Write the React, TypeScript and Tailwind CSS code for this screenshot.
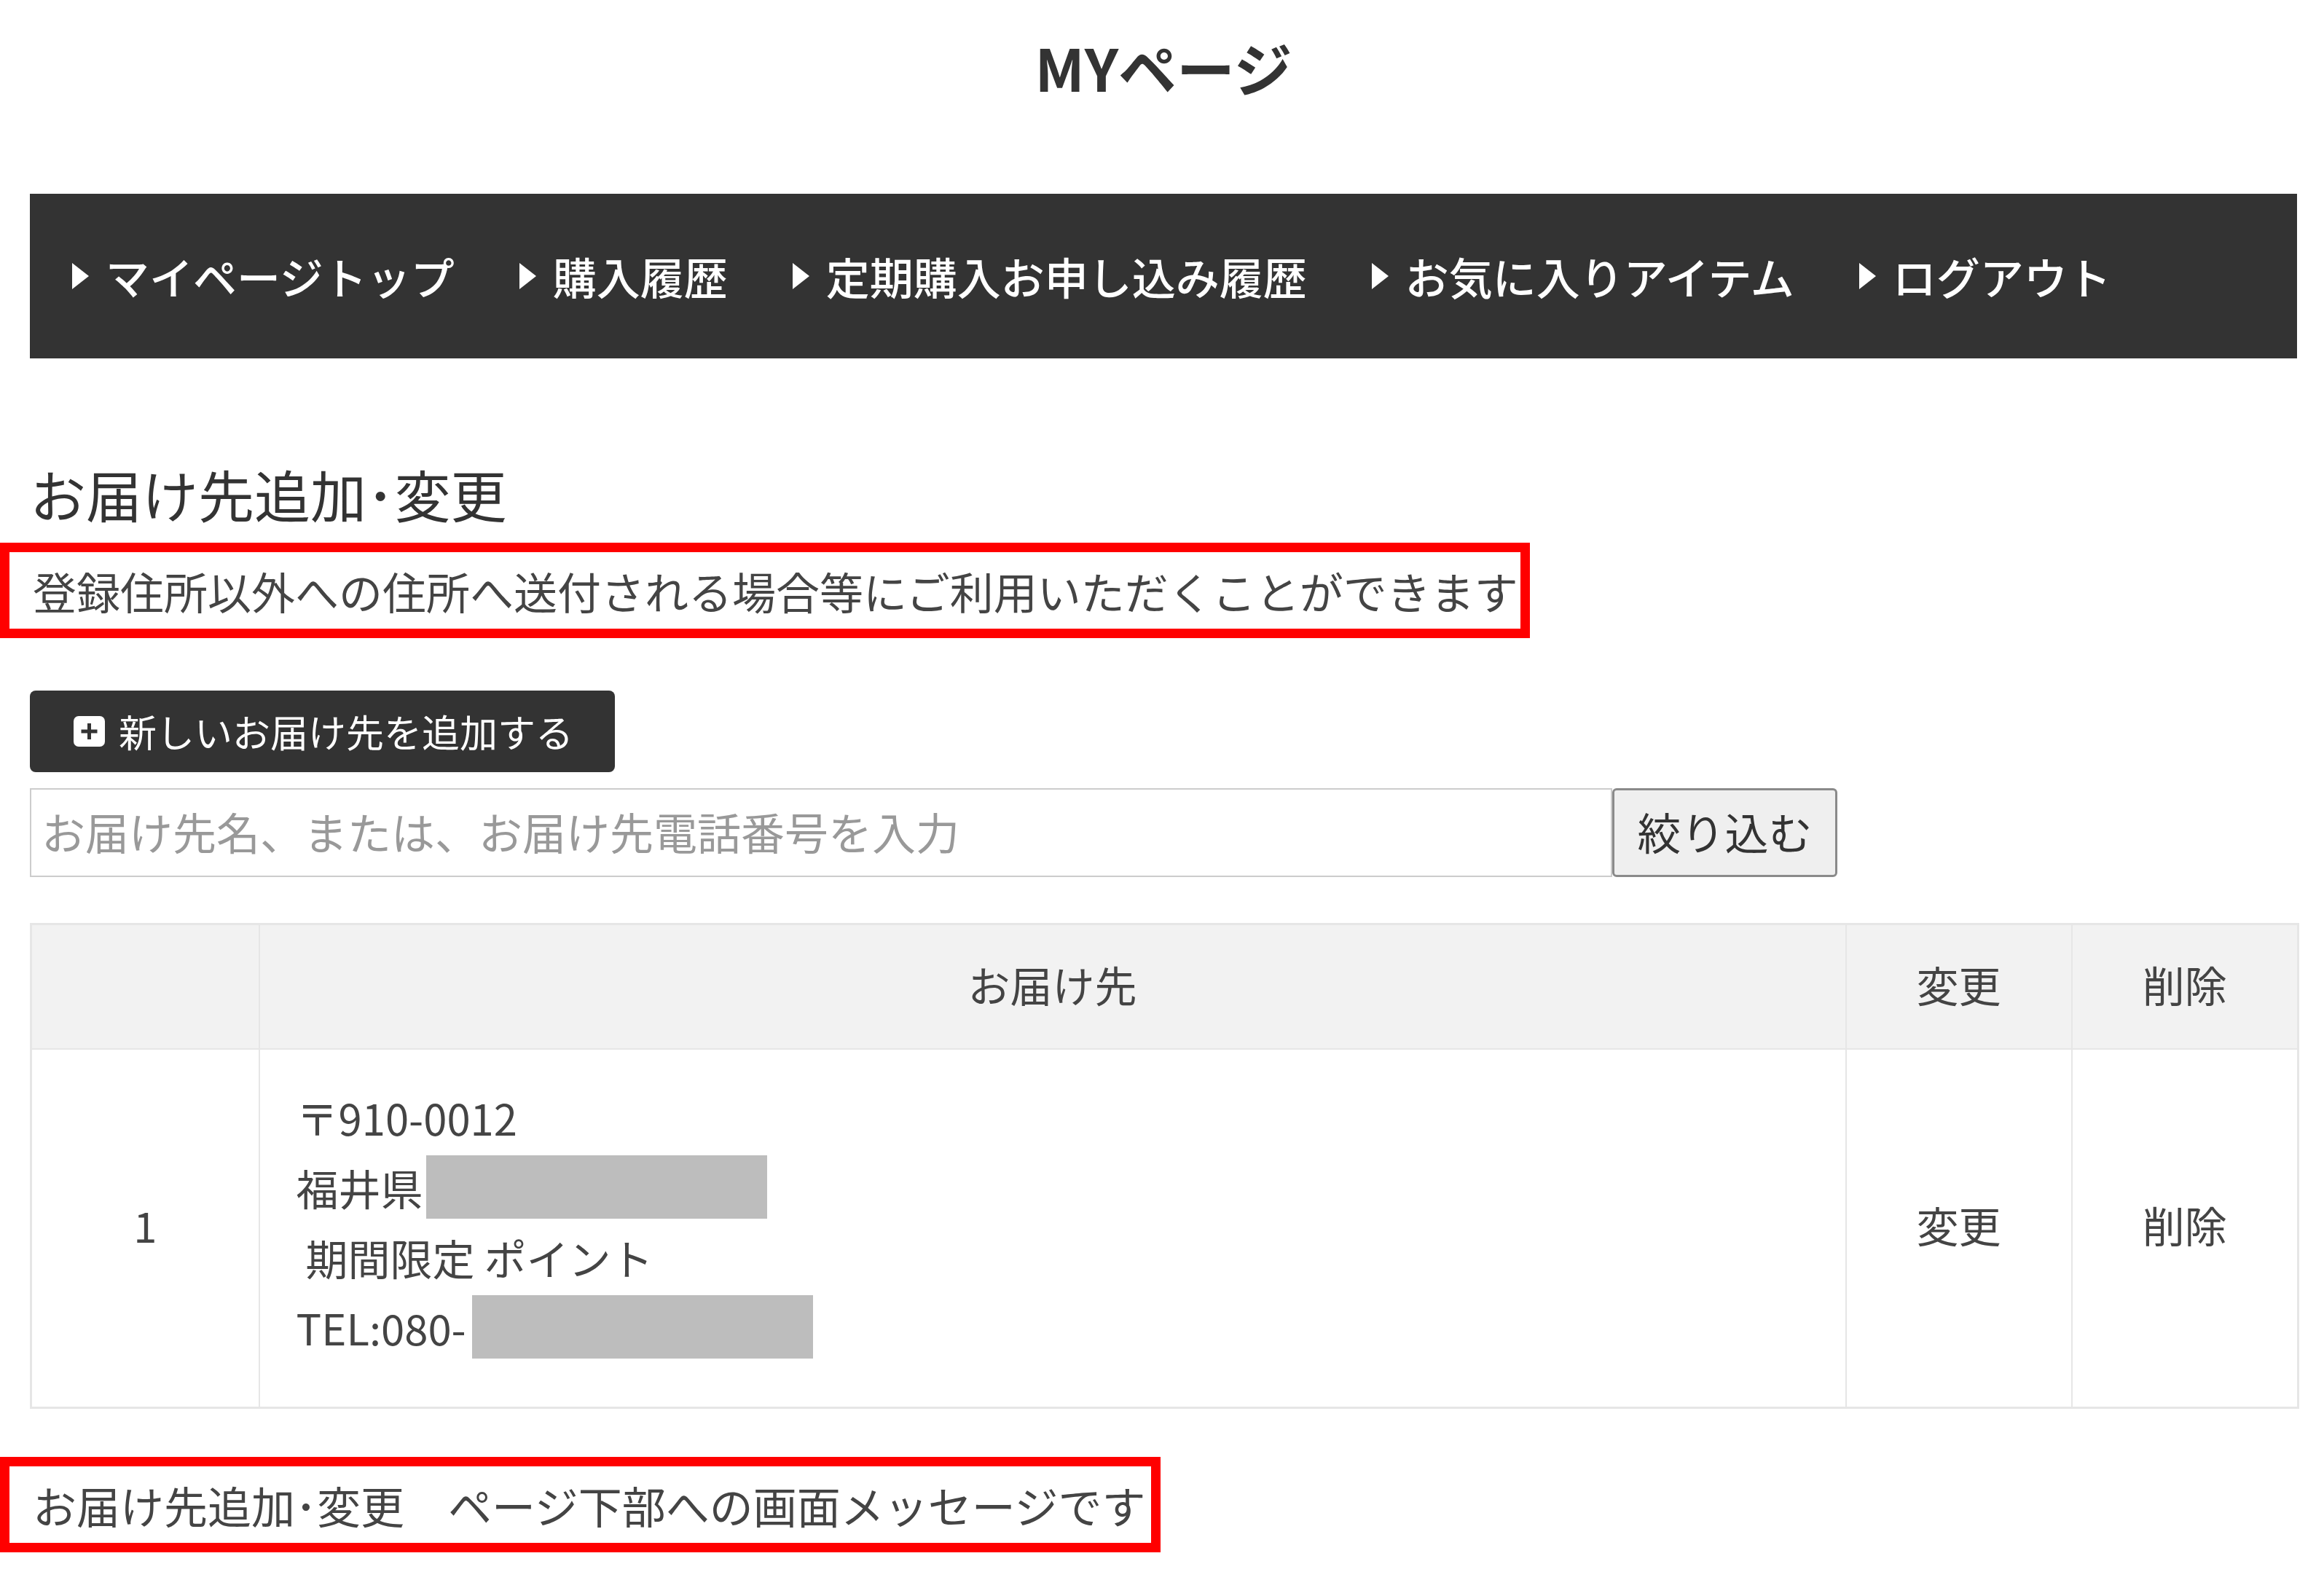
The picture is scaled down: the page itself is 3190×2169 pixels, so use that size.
const NAV_ITEMS = ["マイページトップ", "購入履歴", "定期購入お申し込み履歴", "お気に入りアイテム", "ログアウト"]

function NavArrow() {
  return (
    <svg width="25" height="38" viewBox="0 0 25 38" className="shrink-0">
      <polygon points="1,1 24,19 1,37" fill="#ffffff" />
    </svg>
  )
}

function PlusSquare() {
  return (
    <svg width="45" height="44" viewBox="0 0 45 44" className="shrink-0">
      <rect x="1" y="1" width="43" height="42" rx="7" fill="#ffffff" />
      <rect x="20" y="11" width="5" height="22" fill="#333333" />
      <rect x="11.5" y="19.5" width="22" height="5" fill="#333333" />
    </svg>
  )
}

export default function App() {
  return (
    <div className="min-h-screen w-[3190px] bg-white pl-[41px] pr-[37px] pb-[40px] font-['Noto_Sans_CJK_JP','Noto_Sans',sans-serif] text-[#333333]">
      <h1 className="pt-[48px] text-center text-[80px] font-bold leading-[86px] text-[#333333]">MYページ</h1>

      <nav className="mt-[132px] flex h-[226px] items-center gap-[88px] bg-[#333333] pl-[57px]">
        {NAV_ITEMS.map((item) => (
          <a key={item} className="flex items-center gap-[22px] text-[60px] font-medium leading-none text-white">
            <NavArrow />
            <span>{item}</span>
          </a>
        ))}
      </nav>

      <h2 className="mt-[136px] text-[77px] font-normal leading-[100px] text-[#333333]">お届け先追加･変更</h2>

      <div className="-ml-[41px] mt-[17px] w-fit border-[13px] border-[#ff0000] pl-[32px] pr-[3px]">
        <p className="text-[60px] leading-[105px] text-[#444444]">登録住所以外への住所へ送付される場合等にご利用いただくことができます</p>
      </div>

      <button
        type="button"
        className="mt-[72px] flex h-[112px] w-[803px] items-center gap-[18px] rounded-[8px] bg-[#333333] pl-[59px] text-[52px] leading-none text-white"
      >
        <PlusSquare />
        <span>新しいお届け先を追加する</span>
      </button>

      <div className="mt-[22px] flex h-[122px]">
        <input
          type="text"
          placeholder="お届け先名、または、お届け先電話番号を入力"
          className="h-full w-[2172px] border-2 border-[#cccccc] bg-white px-[14px] pb-[6px] text-[60px] text-[#333333] outline-none placeholder:text-[#999999]"
        />
        <button
          type="button"
          className="h-full w-[309px] rounded-[6px] border-[3px] border-[#8a8a8a] bg-[#efefef] pb-[4px] text-[60px] leading-none text-[#333333]"
        >
          絞り込む
        </button>
      </div>

      <table className="mt-[63px] w-[3112px] table-fixed border-collapse border-[3px] border-[#e6e6e6]">
        <colgroup>
          <col className="w-[313px]" />
          <col className="w-[2178px]" />
          <col className="w-[310px]" />
          <col className="w-[311px]" />
        </colgroup>
        <thead>
          <tr className="h-[171px] bg-[#f2f2f2]">
            <th className="border-2 border-[#e6e6e6] font-normal" />
            <th className="border-2 border-[#e6e6e6] pb-[6px] text-[58px] font-normal text-[#444444]">お届け先</th>
            <th className="border-2 border-[#e6e6e6] pb-[6px] text-[58px] font-normal text-[#444444]">変更</th>
            <th className="border-2 border-[#e6e6e6] pb-[6px] text-[58px] font-normal text-[#444444]">削除</th>
          </tr>
        </thead>
        <tbody>
          <tr className="h-[490px]">
            <td className="border-2 border-[#e6e6e6] pb-[8px] text-center text-[58px] text-[#444444]">1</td>
            <td className="border-2 border-[#e6e6e6] pt-[45px] pb-[61px] pl-[50px] text-[58px] leading-[96px] text-[#444444]">
              <div>〒910-0012</div>
              <div className="flex items-center">
                <span>福井県</span>
                <span className="ml-[4px] inline-block h-[87px] w-[468px] bg-[#bdbdbd]" />
              </div>
              <div>{"\u00a0期間限定 ポイント"}</div>
              <div className="flex items-center">
                <span>TEL:080-</span>
                <span className="ml-[8px] inline-block h-[87px] w-[468px] bg-[#bdbdbd]" />
              </div>
            </td>
            <td className="border-2 border-[#e6e6e6] pb-[8px] text-center text-[58px] text-[#444444]">変更</td>
            <td className="border-2 border-[#e6e6e6] pb-[8px] text-center text-[58px] text-[#444444]">削除</td>
          </tr>
        </tbody>
      </table>

      <div className="-ml-[41px] mt-[66px] w-fit border-[13px] border-[#ff0000] pl-[32px] pr-[7px]">
        <p className="text-[60px] leading-[105px] text-[#444444]">お届け先追加･変更　ページ下部への画面メッセージです</p>
      </div>
    </div>
  )
}
